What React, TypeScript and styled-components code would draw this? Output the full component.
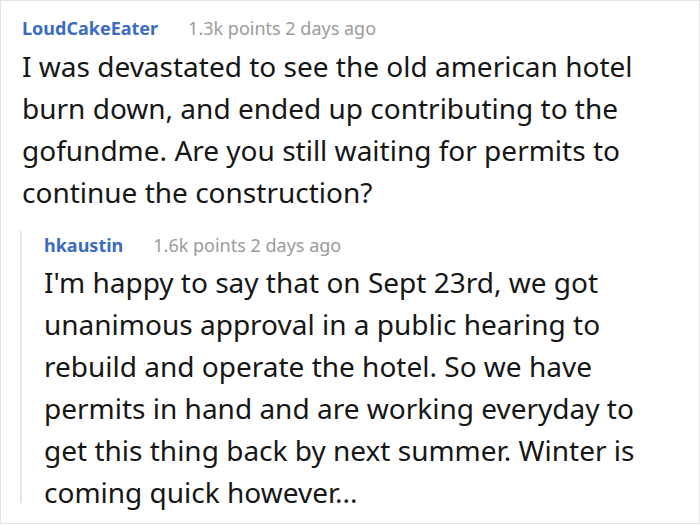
import styled, { createGlobalStyle } from 'styled-components';

const GlobalStyle = createGlobalStyle`
  html, body {
    margin: 0;
    padding: 0;
    background: #ffffff;
  }
  body {
    font-family: 'Noto Sans', 'Open Sans', sans-serif;
  }
`;

const Frame = styled.div`
  box-sizing: border-box;
  width: 700px;
  height: 524px;
  border: 1px solid #e3e3e3;
  padding: 13px 0 0 19px;
  overflow: hidden;
`;

const Comment = styled.div`
  display: flex;
  flex-direction: column;
  padding-left: 2px;
`;

const Header = styled.div`
  display: flex;
  align-items: baseline;
  gap: 30px;
  height: 28px;
  line-height: 28px;
  white-space: nowrap;
`;

const Author = styled.span`
  font-size: 18px;
  font-weight: 700;
  color: #3a6cbf;
`;

const Meta = styled.span`
  font-size: 18px;
  color: #9b9b9b;
`;

const Body = styled.p<{ $gap: number }>`
  margin: ${(p) => p.$gap}px 0 0;
  font-size: 28px;
  line-height: 42px;
  color: #161616;
  white-space: nowrap;
`;

const Line = styled.span`
  display: block;
`;

const Reply = styled.div`
  margin-top: 18px;
  border-left: 2px solid #e6e6e6;
  padding-left: 22px;
  height: 272px;
  display: flex;
  flex-direction: column;
  box-sizing: border-box;
`;

type CommentData = {
  author: string;
  meta: string;
  lines: string[];
};

const parent: CommentData = {
  author: 'LoudCakeEater',
  meta: '1.3k points 2 days ago',
  lines: [
    'I was devastated to see the old american hotel',
    'burn down, and ended up contributing to the',
    'gofundme. Are you still waiting for permits to',
    'continue the construction?',
  ],
};

const child: CommentData = {
  author: 'hkaustin',
  meta: '1.6k points 2 days ago',
  lines: [
    "I'm happy to say that on Sept 23rd, we got",
    'unanimous approval in a public hearing to',
    'rebuild and operate the hotel. So we have',
    'permits in hand and are working everyday to',
    'get this thing back by next summer. Winter is',
    'coming quick however...',
  ],
};

function CommentView({ data, gap }: { data: CommentData; gap: number }) {
  return (
    <>
      <Header>
        <Author>{data.author}</Author>
        <Meta>{data.meta}</Meta>
      </Header>
      <Body $gap={gap}>
        {data.lines.map((line) => (
          <Line key={line}>{line}</Line>
        ))}
      </Body>
    </>
  );
}

export default function App() {
  return (
    <>
      <GlobalStyle />
      <Frame>
        <Comment>
          <CommentView data={parent} gap={3} />
        </Comment>
        <Reply>
          <CommentView data={child} gap={2} />
        </Reply>
      </Frame>
    </>
  );
}
